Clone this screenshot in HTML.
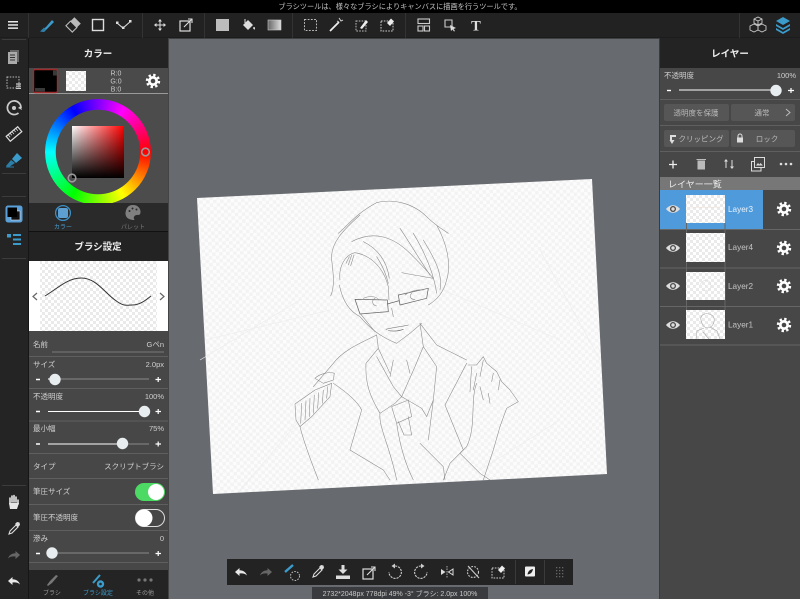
<!DOCTYPE html>
<html><head><meta charset="utf-8"><style>
html,body{margin:0;padding:0;background:#676a6f;width:800px;height:599px;overflow:hidden}
#wrap{position:absolute;left:0;top:0;width:800px;height:599px;overflow:hidden;filter:blur(.35px)}
svg{display:block;font-family:"Liberation Sans","Noto Sans CJK JP",sans-serif}
#wheel{position:absolute;left:45px;top:99px;width:106px;height:106px;border-radius:50%;background:conic-gradient(from 30deg,#f0f,#f00 60deg,#ff0 120deg,#0f0 180deg,#0ff 240deg,#00f 300deg,#f0f 360deg);-webkit-mask:radial-gradient(circle,transparent 42px,#000 42.5px);mask:radial-gradient(circle,transparent 42px,#000 42.5px)}
#clip{position:absolute;left:29px;top:94px;width:139px;height:109px;overflow:hidden}
#clip #wheel{left:16px;top:5px}
#sq{position:absolute;left:72px;top:126px;width:52px;height:52px;background:linear-gradient(to top,#000,rgba(0,0,0,0)),linear-gradient(to right,#fff,#f00)}
svg.o{position:absolute;left:0;top:0}
</style></head><body><div id="wrap">
<svg class="o" width="800" height="599" viewBox="0 0 800 599">
<defs>
<pattern id="ck" width="6" height="6" patternUnits="userSpaceOnUse"><rect width="6" height="6" fill="#fff"/><rect width="3" height="3" fill="#eaeaea"/><rect x="3" y="3" width="3" height="3" fill="#eaeaea"/></pattern>
<pattern id="ckp" width="7" height="7" patternUnits="userSpaceOnUse" patternTransform="rotate(-2.8)"><rect width="7" height="7" fill="#fcfcfc"/><rect width="3.5" height="3.5" fill="#f3f3f3"/><rect x="3.5" y="3.5" width="3.5" height="3.5" fill="#f3f3f3"/></pattern>
<g id="gear"><circle r="5" fill="#fff"/><circle r="6" fill="none" stroke="#fff" stroke-width="2.4" stroke-dasharray="2.4 2.31"/><circle r="2.3" fill="#474747"/></g>
<g id="eye"><path d="M-7 0C-3-5 3-5 7 0C3 5-3 5-7 0Z" fill="#ddd"/><circle r="3" fill="#474747"/><circle r="1.7" fill="#ddd"/></g>
<g id="undo"><path d="M-6 0L-1.5-4V-1.8C2-1.8 5 0 6 3.5C4 1.5 2 1.2-1.5 1.5V4Z" fill="currentColor"/></g>
<g id="trans"><rect x="-6" y="-4" width="10" height="10" fill="none" stroke="#ddd" stroke-width="1.2"/><path d="M-2 2L6-6M2-6H6V-2" fill="none" stroke="#ddd" stroke-width="1.1"/></g>
<g id="dropper"><path d="M-5 5L-4 2L2-4L4-2L-2 4Z" fill="none" stroke="#ddd" stroke-width="1.1"/><path d="M1-5L3-7L5.5-6.5L6-4L4-2Z" fill="#ddd"/></g>
<g id="erasel"><path d="M-6-4H6V6H-6Z" fill="none" stroke="#ccc" stroke-dasharray="1.6 1.2"/><path d="M0-2L4-6.5L7-3.5L3 1Z" fill="#eee"/></g>
</defs>

<rect width="800" height="599" fill="#676a6f"/>

<!-- paper -->
<polygon points="197,198 592,179 607,474 213,494" fill="url(#ckp)"/>
<g fill="none" stroke="#ececec" stroke-width=".6">
<path d="M205 340L330 310M540 250L600 360M300 420L240 490M560 420L480 470M420 280L560 340M300 300L200 360"/>
</g>
<g transform="translate(280 200) scale(.3333)" fill="none" stroke="#8a8a8a" stroke-width="1.7" stroke-linecap="round" stroke-linejoin="round">
<path d="M175 100C210 70 230 40 290 8C340-5 400 10 440 50C465 75 490 90 505 100"/>
<path d="M240 45C190 90 150 130 155 180C160 220 165 260 152 288"/>
<path d="M470 75C500 130 515 190 500 240C490 280 470 300 445 315"/>
<path d="M215 125C280 90 340 110 390 160C420 190 440 210 460 235"/>
<path d="M180 240C175 200 195 165 225 158C270 165 310 200 325 260L327 300"/>
<path d="M250 125C290 145 320 180 328 235M290 170C310 200 320 230 325 250M360 85C390 130 420 180 450 225M400 100C430 150 460 210 470 280M430 120C460 170 490 220 480 270M365 218C400 225 430 230 460 235"/>
<path d="M205 195L215 165M212 197L222 165M198 190L208 170"/>
<path d="M178 255C185 290 200 330 240 350C270 385 300 410 350 430L390 400L425 370"/>
<path d="M225 298L322 300L325 335L240 342ZM355 285L445 265L440 295L360 315ZM322 312L358 302" stroke="#666" stroke-width="2.2"/>
<path d="M250 295C270 285 290 290 297 300M285 295C275 300 275 315 290 318M375 285C395 270 420 268 430 270M395 280C385 290 395 300 405 298"/>
<path d="M335 325L340 350M240 340L285 395"/>
<path d="M318 388C340 382 365 380 385 375M325 392C345 395 360 392 370 388" stroke="#666"/>
<path d="M290 405L295 445L330 520M420 370L430 440L405 500L365 590"/>
<path d="M290 405C240 430 190 450 160 490L100 560M420 370L470 435L560 480"/>
<path d="M295 445L258 490C255 550 270 590 300 640L345 610L365 590L425 625L440 650L460 600L470 500L430 440"/>
<path d="M290 470L340 560L365 590M380 480L390 520M340 480L330 530"/>
<path d="M335 620L385 600L395 650L350 670ZM355 665L372 705L395 705L385 650M350 670C360 740 380 800 400 840M420 730L490 800L495 840"/>
<path d="M300 640C295 680 330 740 350 840M460 600L445 720"/>
<path d="M105 535C120 520 150 515 163 520L160 540L130 550ZM45 612L105 570L155 550L150 590L95 650L60 680L48 660Z"/>
<path d="M65 610L62 670M78 602L75 660M90 595L88 650M103 585L100 640M116 578L113 625M130 570L127 610M143 560L140 595"/>
<path d="M60 680C75 740 100 800 115 840M160 550C190 570 230 600 245 630L210 750L310 810L330 840"/>
<path d="M560 490L495 615L550 750L510 790L490 840"/>
<path d="M565 495L590 495L610 470L620 490L650 515L665 545L690 570L715 605L680 625L660 680L640 750L610 840M575 500L570 575M590 520L580 570M610 480L600 530M640 520L635 545M660 540L655 570M590 550C570 600 590 680 560 740L540 760L600 820L630 840M600 560L610 600M625 580L630 610"/>
</g>

<!-- top bars -->
<rect width="800" height="13" fill="#000"/>
<text x="400" y="9" text-anchor="middle" font-size="7.2" fill="#c4c4c4">ブラシツールは、様々なブラシによりキャンバスに描画を行うツールです。</text>
<rect y="13" width="800" height="25" fill="#222"/>
<rect y="37.5" width="800" height="1" fill="#161616"/>
<g stroke="#333" stroke-width="1"><path d="M28.5 13V38M142.5 13V38M204.5 13V38M292.5 13V38M405.5 13V38M739.5 13V38"/></g>

<!-- left rail -->
<rect y="38" width="29" height="561" fill="#242424"/>
<rect x="28" y="38" width="1" height="561" fill="#161616"/>
<g fill="#e8e8e8"><rect x="8" y="21" width="10" height="1.5"/><rect x="8" y="24.2" width="10" height="1.5"/><rect x="8" y="27.4" width="10" height="1.5"/></g>
<g stroke="#3c3c3c"><path d="M2 39.5H26M2 173.5H26M2 196.5H26M2 258.5H26M2 485.5H26"/></g>

<g transform="translate(13 57)"><rect x="-3" y="-7" width="9" height="12" fill="#666"/><rect x="-5" y="-5" width="9" height="12" fill="#aaa"/><path d="M-3-2H2M-3 0.5H2M-3 3H2" stroke="#333" stroke-width=".9"/></g>
<g transform="translate(14 83)"><rect x="-7" y="-6" width="12" height="11" fill="none" stroke="#bbb" stroke-dasharray="1.5 1.3"/><path d="M2 1H7M2 3.2H7M2 5.4H7" stroke="#ccc" stroke-width="1.2"/></g>
<g transform="translate(14 108)"><path d="M4.5 5A6.8 6.8 0 1 1 7 0" fill="none" stroke="#ccc" stroke-width="1.7"/><path d="M4 0L8 2L6.5 -2Z" fill="#ccc"/><circle r="2" fill="#ccc"/></g>
<g transform="translate(14 134) rotate(-40)"><rect x="-7.5" y="-3.2" width="15" height="6.4" fill="none" stroke="#ddd" stroke-width="1.2"/><path d="M-5-3V0M-2.5-3V-.5M0-3V0M2.5-3V-.5M5-3V0" stroke="#ddd" stroke-width=".8"/></g>
<g transform="translate(14 160)"><path d="M-2-1L3-7L8-2L2 3Z" fill="#3b9ccb"/><path d="M-8 6L-3 0L1 3L-5 7Z" fill="#2a7ea8"/><path d="M-8 7H0" stroke="#2a7ea8"/></g>
<g transform="translate(14 214)"><rect x="-8.5" y="-8.5" width="17" height="17" rx="2.5" fill="#5a9fd8"/><rect x="-3" y="-3" width="9" height="9" fill="#111" stroke="#ddd" stroke-width=".6"/><rect x="-6.5" y="-6.5" width="9.5" height="9.5" fill="#000"/></g>
<g transform="translate(14 240)" fill="#3b9ccb"><rect x="-7" y="-6" width="4" height="3.5"/><rect x="-1" y="-6" width="8" height="2"/><rect x="-1" y="-1.5" width="8" height="2"/><rect x="-1" y="3" width="8" height="2"/></g>
<g transform="translate(14 503)"><path d="M-4 1V-5M-2-1V-7M0-1V-7.5M2-1V-6M4 1V-3" stroke="#e8e8e8" stroke-width="1.6" stroke-linecap="round"/><path d="M-5 0L-4 6H3L5 0Z" fill="#e8e8e8"/></g>
<use href="#dropper" x="14" y="529"/>
<use href="#undo" transform="translate(14 555) scale(-1 1)" color="#666"/>
<use href="#undo" x="14" y="581" color="#e8e8e8"/>

<!-- toolbar icons -->
<path d="M41 31L46 27L52 20L54 22L48 28L44 32Z" fill="#3b9ccb"/><path d="M40 31.5L44 27.5L46 29.5L43 32Z" fill="#2c7ea8"/>
<g transform="translate(73 25) rotate(45)"><rect x="-4.5" y="-6.5" width="9" height="5.5" fill="#bbb"/><rect x="-4.5" y="-1" width="9" height="6.5" fill="none" stroke="#bbb" stroke-width="1.1"/></g>
<rect x="92.5" y="19.5" width="11" height="11" fill="none" stroke="#ddd" stroke-width="1.4"/>
<g transform="translate(124 25)" fill="none" stroke="#ddd" stroke-width="1.1"><path d="M-7-2L-1 3L7-4"/><g fill="#ddd" stroke="none"><rect x="-8" y="-3.5" width="2.5" height="2.5"/><rect x="-2" y="1.5" width="2.5" height="2.5"/><rect x="5" y="-5" width="2.5" height="2.5"/></g></g>
<g transform="translate(160 25)" stroke="#ddd" fill="#ddd"><path d="M-5.5 0H5.5M0-5.5V5.5" stroke-width="1"/><path d="M-6 0L-3.5-2V2ZM6 0L3.5-2V2ZM0-6L-2-3.5H2ZM0 6L-2 3.5H2Z" stroke="none"/></g>
<use href="#trans" x="186" y="25"/>
<rect x="216" y="19" width="13" height="12" fill="#bdbdbd"/>
<g transform="translate(248 25)"><path d="M-5 0L0-5L5 0L0 5Z" fill="#ddd"/><path d="M-3-6V-2" stroke="#ddd"/><path d="M5 3C6 5 7 5 7 3.5C7 2 6 1 5 3Z" fill="#ddd"/></g>
<defs><linearGradient id="g1"><stop offset="0" stop-color="#666"/><stop offset="1" stop-color="#ddd"/></linearGradient></defs>
<rect x="268" y="20" width="13" height="10" fill="url(#g1)" stroke="#ccc" stroke-width=".6"/>
<rect x="304.5" y="19.5" width="12" height="11" fill="none" stroke="#bbb" stroke-dasharray="1.8 1.4"/>
<g transform="translate(336 25)"><path d="M-6 6L3-3" stroke="#eee" stroke-width="1.8"/><path d="M3-7L5-4L7-5M1-4L3-3" stroke="#ddd" stroke-width=".9" fill="none"/></g>
<g transform="translate(362 25)"><path d="M-6-4H4V6H-6Z" fill="none" stroke="#bbb" stroke-dasharray="1.6 1.2"/><path d="M-2 3L4-5L6-3L0 4Z" fill="#eee"/></g>
<use href="#erasel" x="387" y="25"/>
<g transform="translate(424 25)" fill="none" stroke="#ccc" stroke-width="1.1"><rect x="-6" y="-6" width="11.5" height="4.5"/><rect x="-6" y="1" width="5" height="5"/><rect x="0.5" y="1" width="5" height="5"/></g>
<g transform="translate(450 25)"><path d="M-5-5H2V2H-5Z" fill="none" stroke="#ccc" stroke-width="1.1"/><path d="M0 0L6 3L3.5 4L5 6L4 6.5L2.5 4.5L1 6Z" fill="#ddd"/></g>
<text x="476" y="30.5" text-anchor="middle" font-size="14.5" font-weight="bold" fill="#ddd" style="font-family:'Liberation Serif',serif">T</text>
<g transform="translate(758 25)" fill="none" stroke="#ccc" stroke-width=".9"><path d="M0-8L4-6V-2L0 0L-4-2V-6Z"/><path d="M-4-1L0 1V5L-4 7L-8 5V1Z"/><path d="M4-1L8 1V5L4 7L0 5V1Z"/><path d="M-4-6L0-4L4-6M0-4V0"/></g>
<g transform="translate(783 25)" fill="#3b9ccb"><path d="M0-8L7-4L0 0L-7-4Z"/><path d="M-7-1L0 3L7-1V1L0 5L-7 1Z"/><path d="M-7 3L0 7L7 3V5L0 9L-7 5Z"/></g>

<!-- left panel -->
<rect x="29" y="38" width="139.5" height="561" fill="#474747"/>
<rect x="168" y="38" width="1" height="561" fill="#444"/>
<rect x="29" y="38" width="139" height="30" fill="#232323"/>
<text x="98" y="57" text-anchor="middle" font-size="9.5" font-weight="bold" fill="#eee">カラー</text>
<rect x="29" y="68" width="139" height="25" fill="#4a4a4a"/>
<rect x="29" y="93" width="139" height="1" fill="#9a9a9a"/>
<rect x="33.5" y="69.5" width="24" height="23" rx="1.5" fill="#000" stroke="#a02a2a" stroke-width="1.4"/>
<rect x="53" y="70.500" width="4" height="5" fill="#3a3a3a"/><rect x="35" y="88" width="10" height="3.5" fill="#3a3a3a"/>
<rect x="66" y="71" width="20" height="20" fill="url(#ck)"/>
<g font-size="7" fill="#c8c8c8" text-anchor="middle"><text x="116" y="75.5">R:0</text><text x="116" y="83.5">G:0</text><text x="116" y="91.5">B:0</text></g>
<use href="#gear" x="153" y="81"/>
<rect x="29" y="94" width="139" height="109" fill="#4c4c4c"/>
</svg>
<div id="clip"><div id="wheel"></div></div>
<div id="sq"></div>
<svg class="o" width="800" height="599" viewBox="0 0 800 599">
<circle cx="145.5" cy="152" r="3.800" fill="none" stroke="#9a9a9a" stroke-width="1.6"/>
<circle cx="72" cy="178" r="3.800" fill="none" stroke="#9a9a9a" stroke-width="1.6"/>

<rect x="29" y="203" width="139" height="28" fill="#2a2a2a"/>
<rect x="29" y="231" width="139" height="1" fill="#111"/>
<circle cx="63" cy="213" r="7.400" fill="none" stroke="#3b8fc4" stroke-width="1.3"/><rect x="58" y="208" width="10" height="10" rx="2" fill="#5d9fd0"/>
<text x="63" y="229" text-anchor="middle" font-size="6" fill="#4a9ccc">カラー</text>
<path d="M133 205C126 205 125.500 212 125.500 214C126 219 131 220 134.500 220C132.500 217 135 214.500 138.500 215C142 215 141.500 205 133 205Z" fill="#808080"/>
<g fill="#2a2a2a"><circle cx="129.500" cy="211" r="1"/><circle cx="132.500" cy="208.500" r="1"/><circle cx="136.500" cy="209.500" r="1"/></g>
<text x="133" y="229" text-anchor="middle" font-size="6" fill="#777">パレット</text>
<rect x="29" y="232" width="139" height="29" fill="#232323"/>
<text x="98" y="250" text-anchor="middle" font-size="9.5" font-weight="bold" fill="#eee">ブラシ設定</text>
<rect x="29" y="261" width="139" height="70" fill="#fff"/>
<rect x="40" y="261" width="117" height="70" fill="url(#ck)"/>
<path d="M45 296C58 288 68 278 81 278C96 278 104 292 115 300C124 307 127 305 132 305C140 305 146 300 151 296" fill="none" stroke="#333" stroke-width="1"/>
<path d="M37 293L33 296.5L37 300M160 293L164 296.5L160 300" fill="none" stroke="#666" stroke-width="1.2"/>

<g font-size="7.5" fill="#d0d0d0">
<text x="33" y="347">名前</text><text x="164" y="347" text-anchor="end">Gペn</text>
<text x="33" y="367">サイズ</text><text x="164" y="367" text-anchor="end">2.0px</text>
<text x="33" y="399">不透明度</text><text x="164" y="399" text-anchor="end">100%</text>
<text x="33" y="431">最小幅</text><text x="164" y="431" text-anchor="end">75%</text>
<text x="33" y="469">タイプ</text><text x="164" y="469" text-anchor="end">スクリプトブラシ</text>
<text x="33" y="494">筆圧サイズ</text>
<text x="33" y="520">筆圧不透明度</text>
<text x="33" y="541">滲み</text><text x="164" y="541" text-anchor="end">0</text>
</g>
<path d="M52 352H164" stroke="#8a8a8a" stroke-width=".7"/>
<g stroke="#5f5f5f" stroke-width="1"><path d="M29 356.5H168M29 388.5H168M29 421H168M29 453.5H168M29 478.5H168M29 504.5H168M29 530.5H168M29 562.5H168"/></g>

<!-- sliders -->
<g stroke="#fff" stroke-width="1.2" font-size="0">
<path d="M36 379.5H40M36 411.5H40M36 444H40M36 553.5H40" stroke-width="1.4"/>
<path d="M155.5 379.5H161M158.2 377V382M155.5 411.5H161M158.2 409V414M155.5 444H161M158.2 441.5V446.5M155.5 553.5H161M158.2 551V556" stroke-width="1.2"/>
</g>
<g stroke-width="1.1"><path d="M48 379H149" stroke="#8a8a8a"/><path d="M48 379H55" stroke="#fff"/>
<path d="M48 411.5H144" stroke="#fff"/>
<path d="M48 444H122" stroke="#fff"/><path d="M122 444H149" stroke="#8a8a8a"/>
<path d="M48 553H149" stroke="#8a8a8a"/></g>
<g fill="#e8edf0"><circle cx="55" cy="379.5" r="5.7"/><circle cx="144.5" cy="411.5" r="5.7"/><circle cx="122.5" cy="443.5" r="5.7"/><circle cx="52" cy="553" r="5.7"/></g>

<!-- toggles -->
<rect x="135" y="483" width="30" height="18" rx="9" fill="#4cd964"/><circle cx="156" cy="492" r="8" fill="#fff"/>
<rect x="135.5" y="509.5" width="29" height="17" rx="8.5" fill="none" stroke="#ddd"/><circle cx="144" cy="518" r="8.5" fill="#fff"/>

<!-- tabs -->
<rect x="29" y="570" width="139" height="29" fill="#242424"/>
<path d="M47 585L50 581L56 575L58 576L52 583L48 586Z" fill="#777"/>
<text x="52" y="595" text-anchor="middle" font-size="6" fill="#999">ブラシ</text>
<path d="M93 583L100 575" stroke="#3b9ccb" stroke-width="2"/>
<g transform="translate(100.5 584)"><circle r="3.7" fill="#3b9ccb"/><circle r="1.3" fill="#242424"/></g>
<text x="98" y="595" text-anchor="middle" font-size="6" fill="#3b9ccb">ブラシ設定</text>
<g fill="#777"><circle cx="139" cy="580" r="1.6"/><circle cx="145" cy="580" r="1.6"/><circle cx="151" cy="580" r="1.6"/></g>
<text x="145" y="595" text-anchor="middle" font-size="6" fill="#999">その他</text>

<!-- right panel -->
<rect x="659" y="38" width="1" height="561" fill="#3a3a3a"/>
<rect x="660" y="38" width="140" height="561" fill="#474747"/>
<rect x="660" y="38" width="140" height="30" fill="#232323"/>
<text x="730" y="57" text-anchor="middle" font-size="9.5" font-weight="bold" fill="#eee">レイヤー</text>
<g font-size="7.500" fill="#d0d0d0"><text x="664" y="78">不透明度</text><text x="796" y="78" text-anchor="end">100%</text></g>
<path d="M667 90.5H671" stroke="#fff" stroke-width="1.4"/>
<path d="M679 90H776" stroke="#fff" stroke-width="1.1"/><circle cx="776" cy="90.5" r="5.7" fill="#e8edf0"/>
<path d="M788 90.5H794M791 88V93" stroke="#fff" stroke-width="1.2"/>
<g stroke="#5f5f5f"><path d="M660 99.5H800M660 125.5H800M660 151.5H800"/></g>
<g fill="#565656"><rect x="664" y="104" width="65" height="17" rx="2"/><rect x="731" y="104" width="64" height="17" rx="2"/><rect x="664" y="130" width="65" height="17" rx="2"/><rect x="731" y="130" width="64" height="17" rx="2"/></g>
<g font-size="7.500" fill="#bbb" text-anchor="middle"><text x="696" y="115.5">透明度を保護</text><text x="762" y="115.5">通常</text><text x="701" y="141.5">クリッピング</text><text x="767" y="141.5">ロック</text></g>
<path d="M786 109L790 112.5L786 116" fill="none" stroke="#bbb" stroke-width="1"/>
<g transform="translate(673 139)"><path d="M-3-4H3V-2H-1V1H1.5L-1 5L-3.5 1H-3Z" fill="#ddd"/></g>
<g transform="translate(740 139)"><rect x="-3" y="-1.5" width="6" height="5" fill="#ddd"/><path d="M-2-1.5V-3A2 2 0 0 1 2-3V-1.5" fill="none" stroke="#ddd"/></g>
<path d="M669 164.5H677M673 160.5V168.5" stroke="#eee" stroke-width="1.3"/>
<g transform="translate(701 164)" fill="#bbb"><rect x="-3.5" y="-3.5" width="7.5" height="9"/><rect x="-4.5" y="-5" width="9.5" height="1"/></g>
<g transform="translate(729 164)" stroke="#ddd" stroke-width="1" fill="#ddd"><path d="M-3 4V-3M3-4V3" /><path d="M-3-5L-5-2.5H-1ZM3 5L1 2.5H5Z" stroke="none"/></g>
<g transform="translate(758 164)" fill="none" stroke="#ddd" stroke-width="1"><rect x="-3.5" y="-6.5" width="10" height="10"/><path d="M-3.5-2.5H-6.5V7H3V3.5"/><path d="M-2 1.5L0-1L1.5 0.5L2.5-1L5 1.5Z" fill="#ddd" stroke="none"/></g>
<g fill="#ddd"><circle cx="781" cy="164" r="1.3"/><circle cx="786" cy="164" r="1.3"/><circle cx="791" cy="164" r="1.3"/></g>
<rect x="660" y="177" width="140" height="13" fill="#777"/>
<text x="668" y="187.5" font-size="9" fill="#eee">レイヤー一覧</text>
<rect x="660" y="190" width="103" height="39" fill="#4f9adb"/>
<g stroke="#666" stroke-width="1"><path d="M660 229.5H800M660 268H800M660 306.5H800M660 345H800M686.5 223V310M725 223V310"/></g>
<rect x="686" y="195" width="39" height="28" fill="url(#ck)"/>
<path d="M690 208L720 207" stroke="#eedcd0" stroke-width=".6"/>
<rect x="686" y="233" width="39" height="29" fill="url(#ck)"/>
<rect x="686" y="272" width="39" height="28" fill="url(#ck)"/>
<path d="M700 285C703 278 711 279 711 286C710 291 704 292 702 289" fill="none" stroke="#ddd" stroke-width=".6"/>
<rect x="686" y="310" width="39" height="29" fill="url(#ck)"/>
<g fill="none" stroke="#aaa" stroke-width=".6"><path d="M701 320C699 313 711 311 714 318C715 323 712 328 707 328C703 327 702 324 701 320ZM704 328L697 331L696 339M710 327L717 331L720 339M703 332L709 339"/></g>
<g font-size="8.200"><text x="728" y="212" fill="#e8f2fb">Layer3</text><text x="728" y="250" fill="#c4c4c4">Layer4</text><text x="728" y="289" fill="#c4c4c4">Layer2</text><text x="728" y="327.500" fill="#c4c4c4">Layer1</text></g>
<use href="#eye" x="673" y="209"/><use href="#eye" x="673" y="248"/><use href="#eye" x="673" y="286"/><use href="#eye" x="673" y="325"/>
<use href="#gear" x="784" y="209"/><use href="#gear" x="784" y="248"/><use href="#gear" x="784" y="286"/><use href="#gear" x="784" y="325"/>

<!-- bottom bar -->
<rect x="227" y="559" width="346" height="26" fill="#232323"/>
<use href="#undo" x="241" y="572" color="#e8e8e8"/>
<use href="#undo" transform="translate(266 572) scale(-1 1)" color="#666"/>
<g transform="translate(292 572)"><path d="M-7 0L1-7" stroke="#3b9ccb" stroke-width="2.4"/><circle cx="3" cy="4" r="4.5" fill="none" stroke="#bbb" stroke-dasharray="1.6 1.3"/></g>
<use href="#dropper" x="318" y="572"/>
<g transform="translate(343 572)" fill="#ddd"><rect x="-1.5" y="-7" width="3" height="5"/><path d="M-4.5-2.500H4.500L0 2Z"/><rect x="-7" y="3.500" width="14" height="3.500"/></g>
<use href="#trans" x="369" y="573"/>
<g fill="none" stroke="#ccc" stroke-width="1.1">
<path d="M395 566A6.200 6.200 0 1 1 389 572" stroke-dasharray="2.200 1"/><path d="M421 566A6.200 6.200 0 1 0 427 572" stroke-dasharray="2.200 1"/>
<circle cx="473" cy="572" r="5.500" stroke-dasharray="1.800 1.200"/><path d="M468 566L479 578"/></g>
<path d="M395 563.500V568.500L391.500 566ZM421 563.500V568.500L424.500 566Z" fill="#ccc"/>
<g transform="translate(447 572)"><path d="M-6-3V3L-1.500 0Z" fill="#ddd"/><path d="M6-3V3L1.500 0Z" fill="none" stroke="#ddd"/><path d="M0-6V6" stroke="#aaa" stroke-dasharray="1.500 1"/></g>
<use href="#erasel" x="498" y="572"/>
<path d="M515.500 560V584M544.500 560V584" stroke="#3a3a3a"/>
<rect x="525" y="566.500" width="10" height="10" rx="1" fill="#eee"/><path d="M527.500 574.500C528 571 530 569.500 533 569C532.500 572 531 574 527.500 574.500Z" fill="#222"/>
<g fill="#666"><rect x="556" y="567" width="1.300" height="1.300"/><rect x="559" y="567" width="1.300" height="1.300"/><rect x="562" y="567" width="1.300" height="1.300"/><rect x="556" y="570" width="1.300" height="1.300"/><rect x="559" y="570" width="1.300" height="1.300"/><rect x="562" y="570" width="1.300" height="1.300"/><rect x="556" y="573" width="1.300" height="1.300"/><rect x="559" y="573" width="1.300" height="1.300"/><rect x="562" y="573" width="1.300" height="1.300"/><rect x="556" y="576" width="1.300" height="1.300"/><rect x="559" y="576" width="1.300" height="1.300"/><rect x="562" y="576" width="1.300" height="1.300"/></g>
<rect x="312" y="587" width="176" height="12" fill="#3a3b3e"/>
<text x="400" y="596" text-anchor="middle" font-size="7" fill="#c8c8c8">2732*2048px 778dpi 49% -3° ブラシ: 2.0px 100%</text>
</svg>
</div></body></html>
